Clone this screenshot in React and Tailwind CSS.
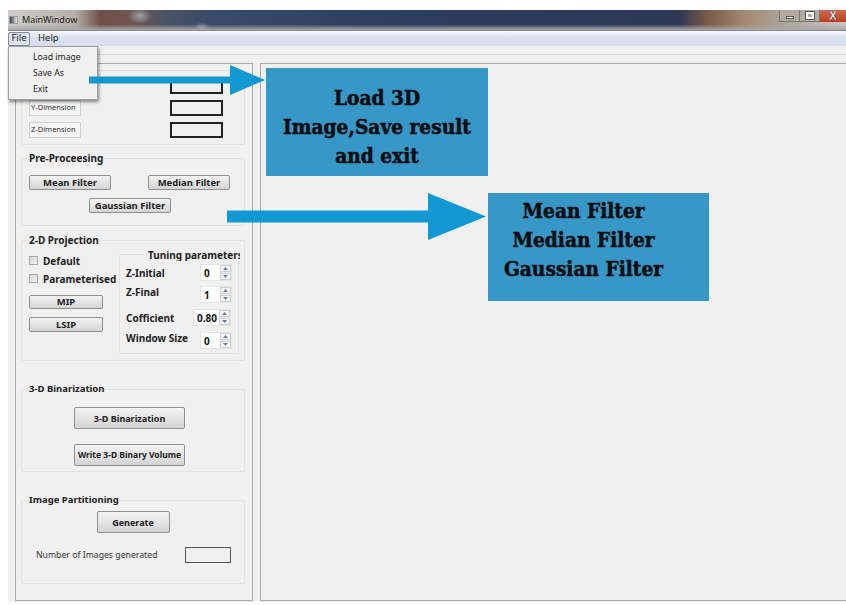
const uiFont = "font-['Noto_Sans',sans-serif]"
const calloutFont = "font-['DejaVu_Serif',serif] [font-stretch:condensed] [-webkit-text-stroke:0.5px_#0d0d12]"

function QtButton({ className = '', size = 'text-[9.5px]', children }) {
  return (
    <button
      type="button"
      className={`flex items-center justify-center rounded-[2px] border border-[#8f8f8f] bg-gradient-to-b from-[#f4f4f4] to-[#d4d4d4] font-bold leading-none text-[#222] ${size} ${className}`}
    >
      {children}
    </button>
  )
}

function GroupBox({ title, titleSize = 'text-[10px]', className = '', children }) {
  return (
    <section className={`relative rounded-[2px] border border-[#e2e2e2] ${className}`}>
      {title && (
        <h2 className={`absolute -top-[8px] left-[7px] bg-[#f0f0f0] font-bold leading-[14px] text-[#222] ${titleSize}`}>
          {title}
        </h2>
      )}
      {children}
    </section>
  )
}

function Check({ label, className = '' }) {
  return (
    <label className={`flex h-[9px] items-center gap-[5px] text-[10px] font-bold leading-none text-[#222] ${className}`}>
      <span className="h-[9px] w-[9px] border border-[#a8a8a8] bg-gradient-to-br from-[#d4d4d4] to-[#f4f4f4]" />
      {label}
    </label>
  )
}

function SpinArrow({ down }) {
  return (
    <span className="flex h-[7px] items-center justify-center border border-[#d0d0d0] bg-[#f6f6f6]">
      <svg width="5" height="3" viewBox="0 0 5 3" fill="#6a78b8">
        <path d={down ? 'M0 0H5L2.5 3Z' : 'M2.5 0L5 3H0Z'} />
      </svg>
    </span>
  )
}

function Spin({ value, width = 'w-[32px]' }) {
  return (
    <div className={`flex h-[17px] items-center justify-between border border-[#e4e4e4] bg-white pl-[3px] text-[10px] font-bold leading-none text-[#111] ${width}`}>
      <span>{value}</span>
      <span className="flex h-full w-[11px] flex-col justify-center gap-px bg-[#ececec]">
        <SpinArrow />
        <SpinArrow down />
      </span>
    </div>
  )
}

function TuningRow({ label, value, width, labelClass = '', className = '' }) {
  return (
    <div className={`flex items-center justify-between pl-[6px] pr-[6px] ${className}`}>
      <span className={`text-[10px] font-bold leading-none text-[#222] ${labelClass}`}>{label}</span>
      <Spin value={value} width={width} />
    </div>
  )
}

function DimensionRow({ label }) {
  return (
    <div className="flex items-center justify-between pl-[7px] pr-[21px]">
      <span className="flex h-[16px] w-[52px] items-center border border-[#d0d0d0] bg-[#f4f4f4] pl-[1px] text-[7.5px] leading-none text-[#333]">
        {label}
      </span>
      <span className="h-[16px] w-[53px] border-2 border-[#222] bg-[#f0f0f0]" />
    </div>
  )
}

function Callout({ className, lines }) {
  return (
    <div className={`absolute flex flex-col items-center bg-[#3797c6] font-bold text-[#0d0d12] ${calloutFont} ${className}`}>
      {lines.map((line) => (
        <span key={line}>{line}</span>
      ))}
    </div>
  )
}

function Arrow({ className, width, height, head, shaft }) {
  const mid = height / 2
  const neck = width - head
  return (
    <svg
      className={`absolute ${className}`}
      width={width}
      height={height}
      viewBox={`0 0 ${width} ${height}`}
    >
      <path
        d={`M0 ${mid - shaft / 2} H${neck} V0 L${width} ${mid} L${neck} ${height} V${mid + shaft / 2} H0 Z`}
        fill="#1298d2"
      />
    </svg>
  )
}

export default function App() {
  return (
    <div className={`relative h-[605px] w-[846px] overflow-hidden bg-white pl-[8px] pt-[10px] ${uiFont}`}>
      <div className="flex h-[592px] flex-col bg-[#f0f0f0]">
        {/* title bar over the blurred desktop */}
        <header className="relative flex h-[20px] items-center bg-[linear-gradient(180deg,transparent_72%,#a8a8a8_100%),radial-gradient(ellipse_12px_8px_at_132px_6px,#9aa0a6,transparent),radial-gradient(ellipse_8px_6px_at_194px_18px,#8d9aa6,transparent),linear-gradient(90deg,#d0cecc_0%,#b5b0ab_8%,#6f5048_11%,#6e5650_15%,#4a5366_19%,#3a4a6a_24%,#2d3e60_45%,#2c3855_80%,#7a5a48_83.5%,#a58a72_88%,#aaa29a_92%,#c8c4c0_100%)] pl-[1px] text-[9px] text-[#222]">
          <span className="mr-[4px] h-[8px] w-[9px] border border-[#999] bg-gradient-to-r from-[#345] to-[#eee]" />
          MainWindow
          <div className="absolute right-0 top-0 flex h-[12px]">
            <span className="flex w-[21px] items-center justify-center border-x border-b border-[#777] bg-[#b3a99f]">
              <span className="mt-[4px] h-[3px] w-[8px] border border-[#555] bg-white" />
            </span>
            <span className="flex w-[20px] items-center justify-center border-r border-b border-[#777] bg-[#b3a99f]">
              <span className="h-[7px] w-[8px] border-2 border-white outline outline-1 outline-[#555]" />
            </span>
            <span className="flex w-[26px] items-center justify-center bg-gradient-to-b from-[#cf6a4e] to-[#bf3b20] text-[12px] font-bold leading-none text-white [-webkit-text-stroke:0.5px_#444]">
              X
            </span>
          </div>
        </header>

        {/* menu bar */}
        <nav className="flex h-[16px] items-center border-t border-[#888] bg-gradient-to-b from-[#f7f9fd] via-[#d8dff0] to-[#d8dff0] text-[9.5px] text-[#222]">
          <span className="flex h-[14px] w-[22px] items-center justify-center rounded-[2px] border border-[#7f8aa0] bg-[#dde4f2]">File</span>
          <span className="ml-[8px]">Help</span>
        </nav>

        <div className="h-[9px] border-b border-[#dcdcdc]" />

        <main className="flex min-h-0 flex-1 gap-[7px] pb-[1px] pl-[7px] pt-[8px]">
          {/* controls column */}
          <aside className="flex w-[238px] flex-col border border-[#a9a9a9] pl-[5px] pr-[7px]">
            <GroupBox className="mt-[6px] flex h-[75px] flex-col gap-[6px] border-[#a9a9a9] pt-[7px]">
              <DimensionRow label="" />
              <DimensionRow label="Y-Dimension" />
              <DimensionRow label="Z-Dimension" />
            </GroupBox>

            <GroupBox title="Pre-Proceesing" className="mt-[13px] h-[68px]">
              <div className="flex justify-between pl-[7px] pr-[14px] pt-[16px]">
                <QtButton className="h-[15px] w-[82px]">Mean Filter</QtButton>
                <QtButton className="h-[15px] w-[82px]">Median Filter</QtButton>
              </div>
              <div className="flex justify-center pr-[6px] pt-[8px]">
                <QtButton className="h-[15px] w-[82px]">Gaussian Filter</QtButton>
              </div>
            </GroupBox>

            <GroupBox title="2-D Projection" className="mt-[14px] flex h-[121px] pl-[7px] pt-[13px]">
              <div className="flex w-[90px] flex-col pt-[2px]">
                <Check label="Default" />
                <Check label="Parameterised" className="mt-[9px]" />
                <QtButton className="mt-[12px] h-[14px] w-[74px]">MIP</QtButton>
                <QtButton className="mt-[8px] h-[15px] w-[74px]">LSIP</QtButton>
              </div>
              <div className="relative h-[100px] w-[120px] rounded-[2px] border border-[#e2e2e2]">
                <h3 className="absolute -top-[6px] left-[28px] w-[92px] overflow-hidden whitespace-nowrap bg-[#f0f0f0] text-[10px] font-bold leading-[12px] text-[#222]">
                  Tuning parameters
                </h3>
                <TuningRow label="Z-Initial" value="0" className="mt-[9px]" />
                <TuningRow label="Z-Final" value="1" labelClass="mb-[6px]" className="mt-[5px]" />
                <TuningRow label="Cofficient" value="0.80" width="w-[38px]" className="mt-[6px] !pr-[7px]" />
                <TuningRow label="Window Size" value="0" labelClass="mb-[6px]" className="mt-[6px]" />
              </div>
            </GroupBox>

            <GroupBox title="3-D Binarization" titleSize="text-[9.5px]" className="mt-[28px] flex h-[83px] flex-col items-center gap-[15px] pr-[7px] pt-[17px]">
              <QtButton size="text-[9px]" className="h-[22px] w-[111px]">3-D Binarization</QtButton>
              <QtButton size="text-[8.5px]" className="h-[22px] w-[111px]">Write 3-D Binary Volume</QtButton>
            </GroupBox>

            <GroupBox title="Image Partitioning" titleSize="text-[9.5px]" className="mt-[28px] h-[84px] pt-[10px]">
              <div className="flex justify-center">
                <QtButton size="text-[9px]" className="h-[22px] w-[73px]">Generate</QtButton>
              </div>
              <div className="mt-[14px] flex items-center justify-between pl-[14px] pr-[13px]">
                <span className="text-[8.7px] leading-none text-[#333]">Number of Images generated</span>
                <span className="h-[16px] w-[46px] border border-[#555]" />
              </div>
            </GroupBox>
          </aside>

          {/* empty result view */}
          <section className="flex-1 border-y border-l border-[#a9a9a9]" />
        </main>
      </div>

      {/* File menu, open */}
      <div className="absolute left-[8px] top-[46px] flex h-[54px] w-[90px] flex-col justify-around border border-[#a0a0a0] bg-[#f0f0f0] py-[2px] pl-[24px] text-[8.7px] leading-none text-[#222] shadow-[1px_2px_3px_rgba(0,0,0,0.45)]">
        <span>Load image</span>
        <span>Save As</span>
        <span>Exit</span>
      </div>

      {/* annotations */}
      <Arrow className="left-[89px] top-[65px]" width={176} height={30} head={35} shaft={7} />
      <Arrow className="left-[227px] top-[193px]" width={259} height={47} head={58} shaft={12} />
      <Callout
        className="left-[266px] top-[68px] h-[108px] w-[222px] justify-center pt-[10px] text-[20.7px] leading-[29px]"
        lines={['Load 3D', 'Image,Save result', 'and exit']}
      />
      <Callout
        className="left-[488px] top-[193px] h-[108px] w-[221px] pr-[30px] pt-[4px] text-[20.7px] leading-[29px]"
        lines={['Mean Filter', 'Median Filter', 'Gaussian Filter']}
      />
    </div>
  )
}
